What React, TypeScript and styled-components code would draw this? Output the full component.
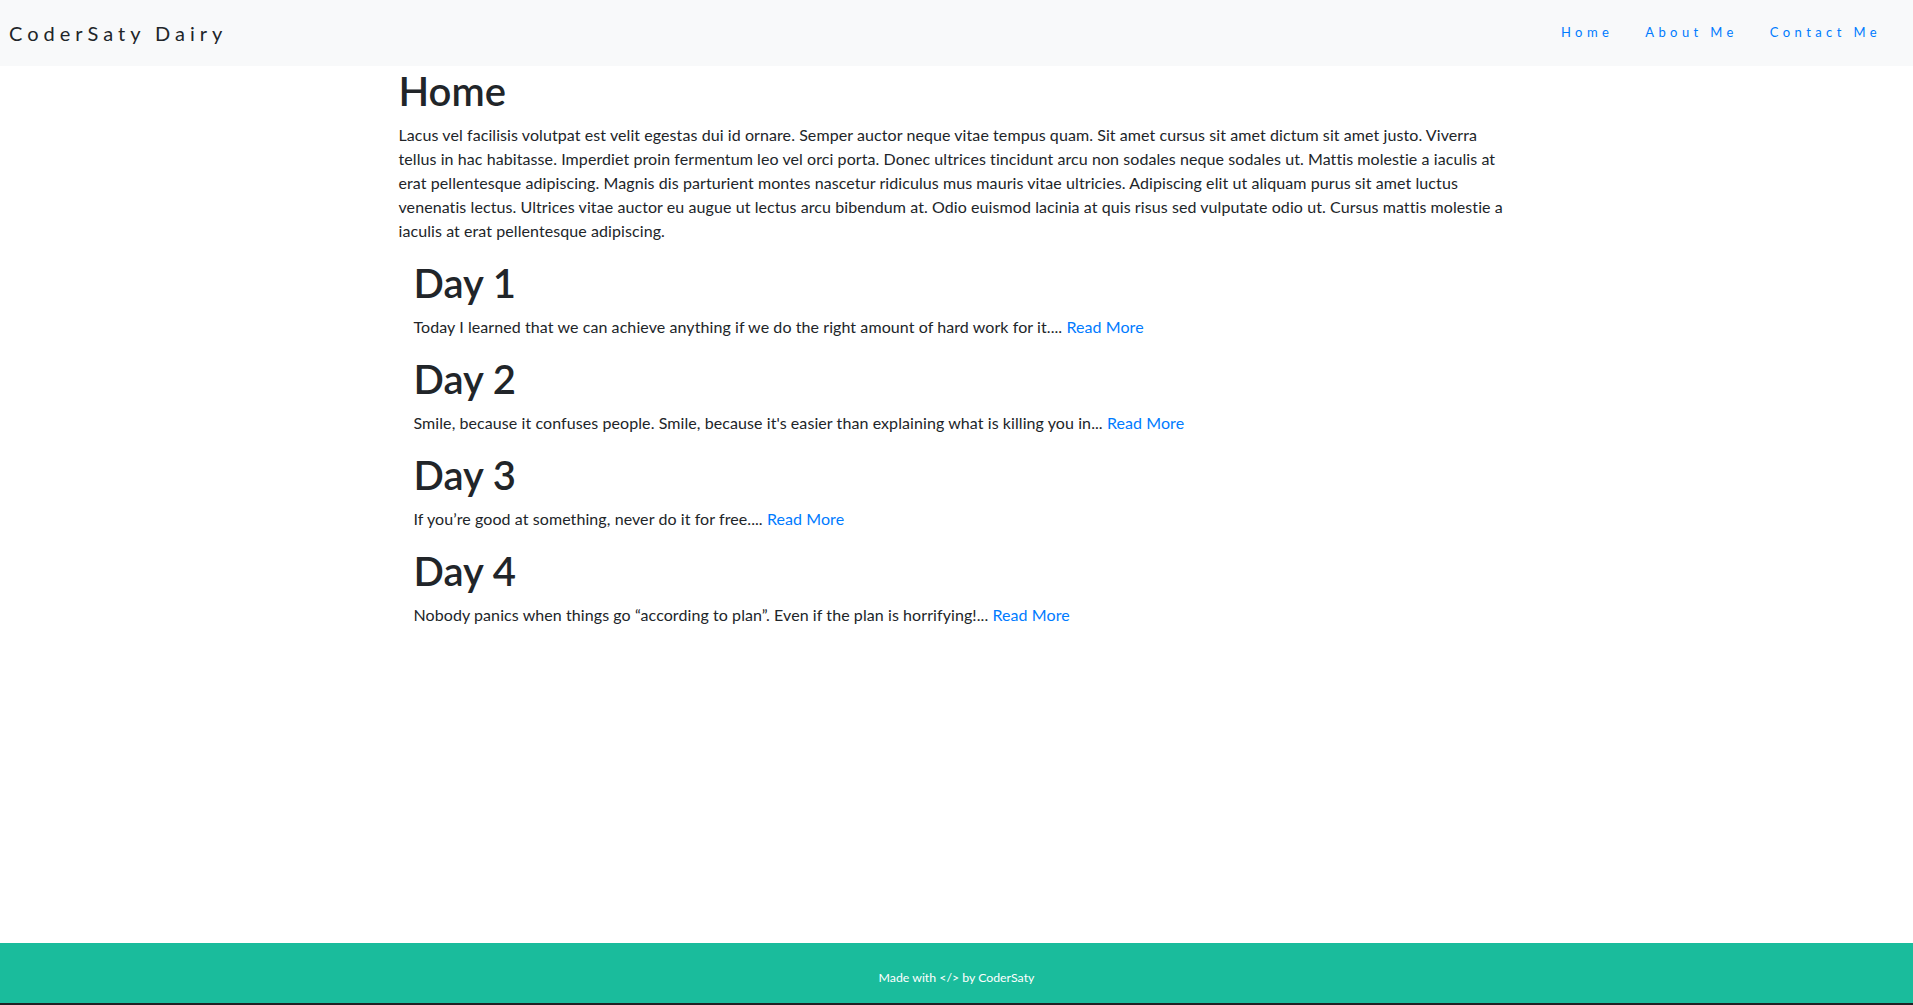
import styled, { createGlobalStyle } from "styled-components";

const GlobalStyle = createGlobalStyle`
  * {
    box-sizing: border-box;
  }

  html,
  body {
    margin: 0;
    padding: 0;
    background: #fff;
  }

  body {
    font-family: "Segoe UI", Lato, "Liberation Sans", sans-serif;
    font-size: 16px;
    line-height: 1.5;
    letter-spacing: 0.08px;
    color: #212529;
  }
`;

type Entry = {
  day: number;
  text: string;
};

const entries: Entry[] = [
  {
    day: 1,
    text: "Today I learned that we can achieve anything if we do the right amount of hard work for it....",
  },
  {
    day: 2,
    text: "Smile, because it confuses people. Smile, because it's easier than explaining what is killing you in...",
  },
  { day: 3, text: "If you\u2019re good at something, never do it for free...." },
  {
    day: 4,
    text: "Nobody panics when things go \u201caccording to plan\u201d. Even if the plan is horrifying!...",
  },
];

const intro =
  "Lacus vel facilisis volutpat est velit egestas dui id ornare. Semper auctor neque vitae tempus quam. Sit amet cursus sit amet dictum sit amet justo. Viverra tellus in hac habitasse. Imperdiet proin fermentum leo vel orci porta. Donec ultrices tincidunt arcu non sodales neque sodales ut. Mattis molestie a iaculis at erat pellentesque adipiscing. Magnis dis parturient montes nascetur ridiculus mus mauris vitae ultricies. Adipiscing elit ut aliquam purus sit amet luctus venenatis lectus. Ultrices vitae auctor eu augue ut lectus arcu bibendum at. Odio euismod lacinia at quis risus sed vulputate odio ut. Cursus mattis molestie a iaculis at erat pellentesque adipiscing.";

function App() {
  return (
    <>
      <GlobalStyle />
      <Page>
        <Navbar>
          <Brand href="#">CoderSaty Dairy</Brand>
          <NavList>
            <li>
              <NavLink href="#">Home</NavLink>
            </li>
            <li>
              <NavLink href="#">About Me</NavLink>
            </li>
            <li>
              <NavLink href="#">Contact Me</NavLink>
            </li>
          </NavList>
        </Navbar>

        <Main>
          <Container>
            <Heading>Home</Heading>
            <Paragraph>{intro}</Paragraph>

            <Entries>
              {entries.map((entry) => (
                <section key={entry.day}>
                  <Heading>Day {entry.day}</Heading>
                  <Paragraph>
                    {entry.text} <ReadMore href="#">Read More</ReadMore>
                  </Paragraph>
                </section>
              ))}
            </Entries>
          </Container>
        </Main>

        <Footer>
          <FooterText>Made with &lt;/&gt; by CoderSaty</FooterText>
        </Footer>
        <BottomStrip />
      </Page>
    </>
  );
}

export default App;

const Page = styled.div`
  display: flex;
  flex-direction: column;
  min-height: 100vh;
`;

const Navbar = styled.nav`
  display: flex;
  align-items: center;
  justify-content: space-between;
  height: 66px;
  padding: 0 0 1px 9px;
  background-color: #f8f9fa;
`;

const Brand = styled.a`
  font-size: 20px;
  letter-spacing: 5px;
  color: #212529;
  text-decoration: none;
`;

const NavList = styled.ul`
  display: flex;
  list-style: none;
  margin: 0;
  padding: 0 16px 0 0;
`;

const NavLink = styled.a`
  display: block;
  padding: 8px 16px;
  font-size: 13px;
  letter-spacing: 4.4px;
  color: #007bff;
  text-decoration: none;
`;

const Main = styled.main`
  flex: 1;
  padding-top: 1px;
`;

const Container = styled.div`
  width: 1140px;
  margin: 0 auto;
  padding: 0 15px 0 12px;
`;

const Entries = styled.div`
  padding-left: 15px;
`;

const Heading = styled.h1`
  margin: 0 0 8px;
  font-size: 40px;
  font-weight: 600;
  line-height: 1.2;
  letter-spacing: 0;
  color: #212529;
`;

const Paragraph = styled.p`
  margin: 0 0 16px;
`;

const ReadMore = styled.a`
  color: #007bff;
  text-decoration: none;
`;

const Footer = styled.footer`
  display: flex;
  align-items: center;
  justify-content: center;
  height: 60px;
  padding-top: 10px;
  background-color: #1abc9c;
`;

const FooterText = styled.span`
  font-size: 12.3px;
  letter-spacing: 0;
  color: #fff;
`;

const BottomStrip = styled.div`
  height: 2px;
  background-color: #202124;
`;
